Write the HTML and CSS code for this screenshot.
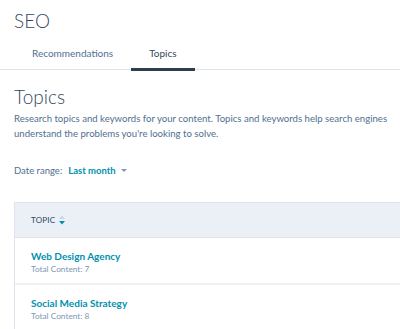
FILE: index.html
```html
<!DOCTYPE html>
<html lang="en">
<head>
	<meta charset="UTF-8">
	<title>SEO - Topics</title>
	<link rel="stylesheet" href="styles.css">
</head>
<body>
	<div class="header">
		<h1 class="title">SEO</h1>
		<ul class="tabs">
			<li class="tab">Recommendations</li>
			<li class="tab active">Topics</li>
		</ul>
	</div>
	<div class="content">
		<h2 class="heading">Topics</h2>
		<p class="intro">Research topics and keywords for your content. Topics and keywords help search engines understand the problems you're looking to solve.</p>
		<div class="filter">
			<span class="label">Date range:</span>
			<a class="dropdown">Last month <span class="caret"></span></a>
		</div>
		<div class="table">
			<div class="thead">
				<span class="th">TOPIC</span>
				<svg class="sort" width="6" height="10" viewBox="0 0 6 10">
					<path d="M0 4 L3 0.5 L6 4 Z" fill="#cbd6e2"/>
					<path d="M0 6 L3 9.5 L6 6 Z" fill="#0091ae"/>
				</svg>
			</div>
			<div class="row">
				<a class="name">Web Design Agency</a>
				<div class="meta">Total Content: 7</div>
			</div>
			<div class="row">
				<a class="name">Social Media Strategy</a>
				<div class="meta">Total Content: 8</div>
			</div>
		</div>
	</div>
</body>
</html>
```

FILE: styles.css
```css
*{margin:0; padding:0;}
body{font-family: Lato, "Open Sans", sans-serif; color:#33475b; background:#fff; overflow:hidden;}

.header{border-bottom:1px solid #dfe3eb;}
.title{font-size:19px; font-weight:300; color:#33475b; padding:9px 0 0 14px; line-height:24px; height:33px;}
.tabs{list-style:none; display:flex; padding-left:14px;}
.tab{font-size:10px; color:#516f90; padding:5px 18px 9px; border-bottom:3px solid transparent; margin-bottom:-2px;}
.tab.active{color:#33475b; border-bottom-color:#2d3e50;}

.content{padding:15px 0 0 14px;}
.heading{font-size:19px; font-weight:300; line-height:24px; color:#33475b;}
.intro{font-size:9.6px; line-height:15px; color:#516f90; width:384px; margin-top:2px;}
.filter{margin-top:24px; font-size:9.5px; display:flex; align-items:center; gap:6px;}
.label{color:#516f90;}
.dropdown{color:#0091ae; font-weight:700; display:flex; align-items:center; gap:5px;}
.caret{width:0; height:0; border-left:3px solid transparent; border-right:3px solid transparent; border-top:3px solid #7c98b6;}

.table{margin-top:26px; border-left:1px solid #dfe3eb; border-top:1px solid #dfe3eb;}
.thead{background:#eaf0f6; height:34px; display:flex; align-items:center; gap:4px; padding-left:16px; border-bottom:1px solid #dfe3eb;}
.th{font-size:8px; font-weight:400; color:#33475b; letter-spacing:0.2px;}
.sort{display:block;}
.row{padding:11px 16px 0; height:34px; border-bottom:2px solid #eef1f5;}
.name{display:block; color:#0091ae; font-weight:700; font-size:10px; line-height:14px;}
.meta{font-size:8.3px; color:#7c98b6; line-height:12px; margin-top:0;}
```
